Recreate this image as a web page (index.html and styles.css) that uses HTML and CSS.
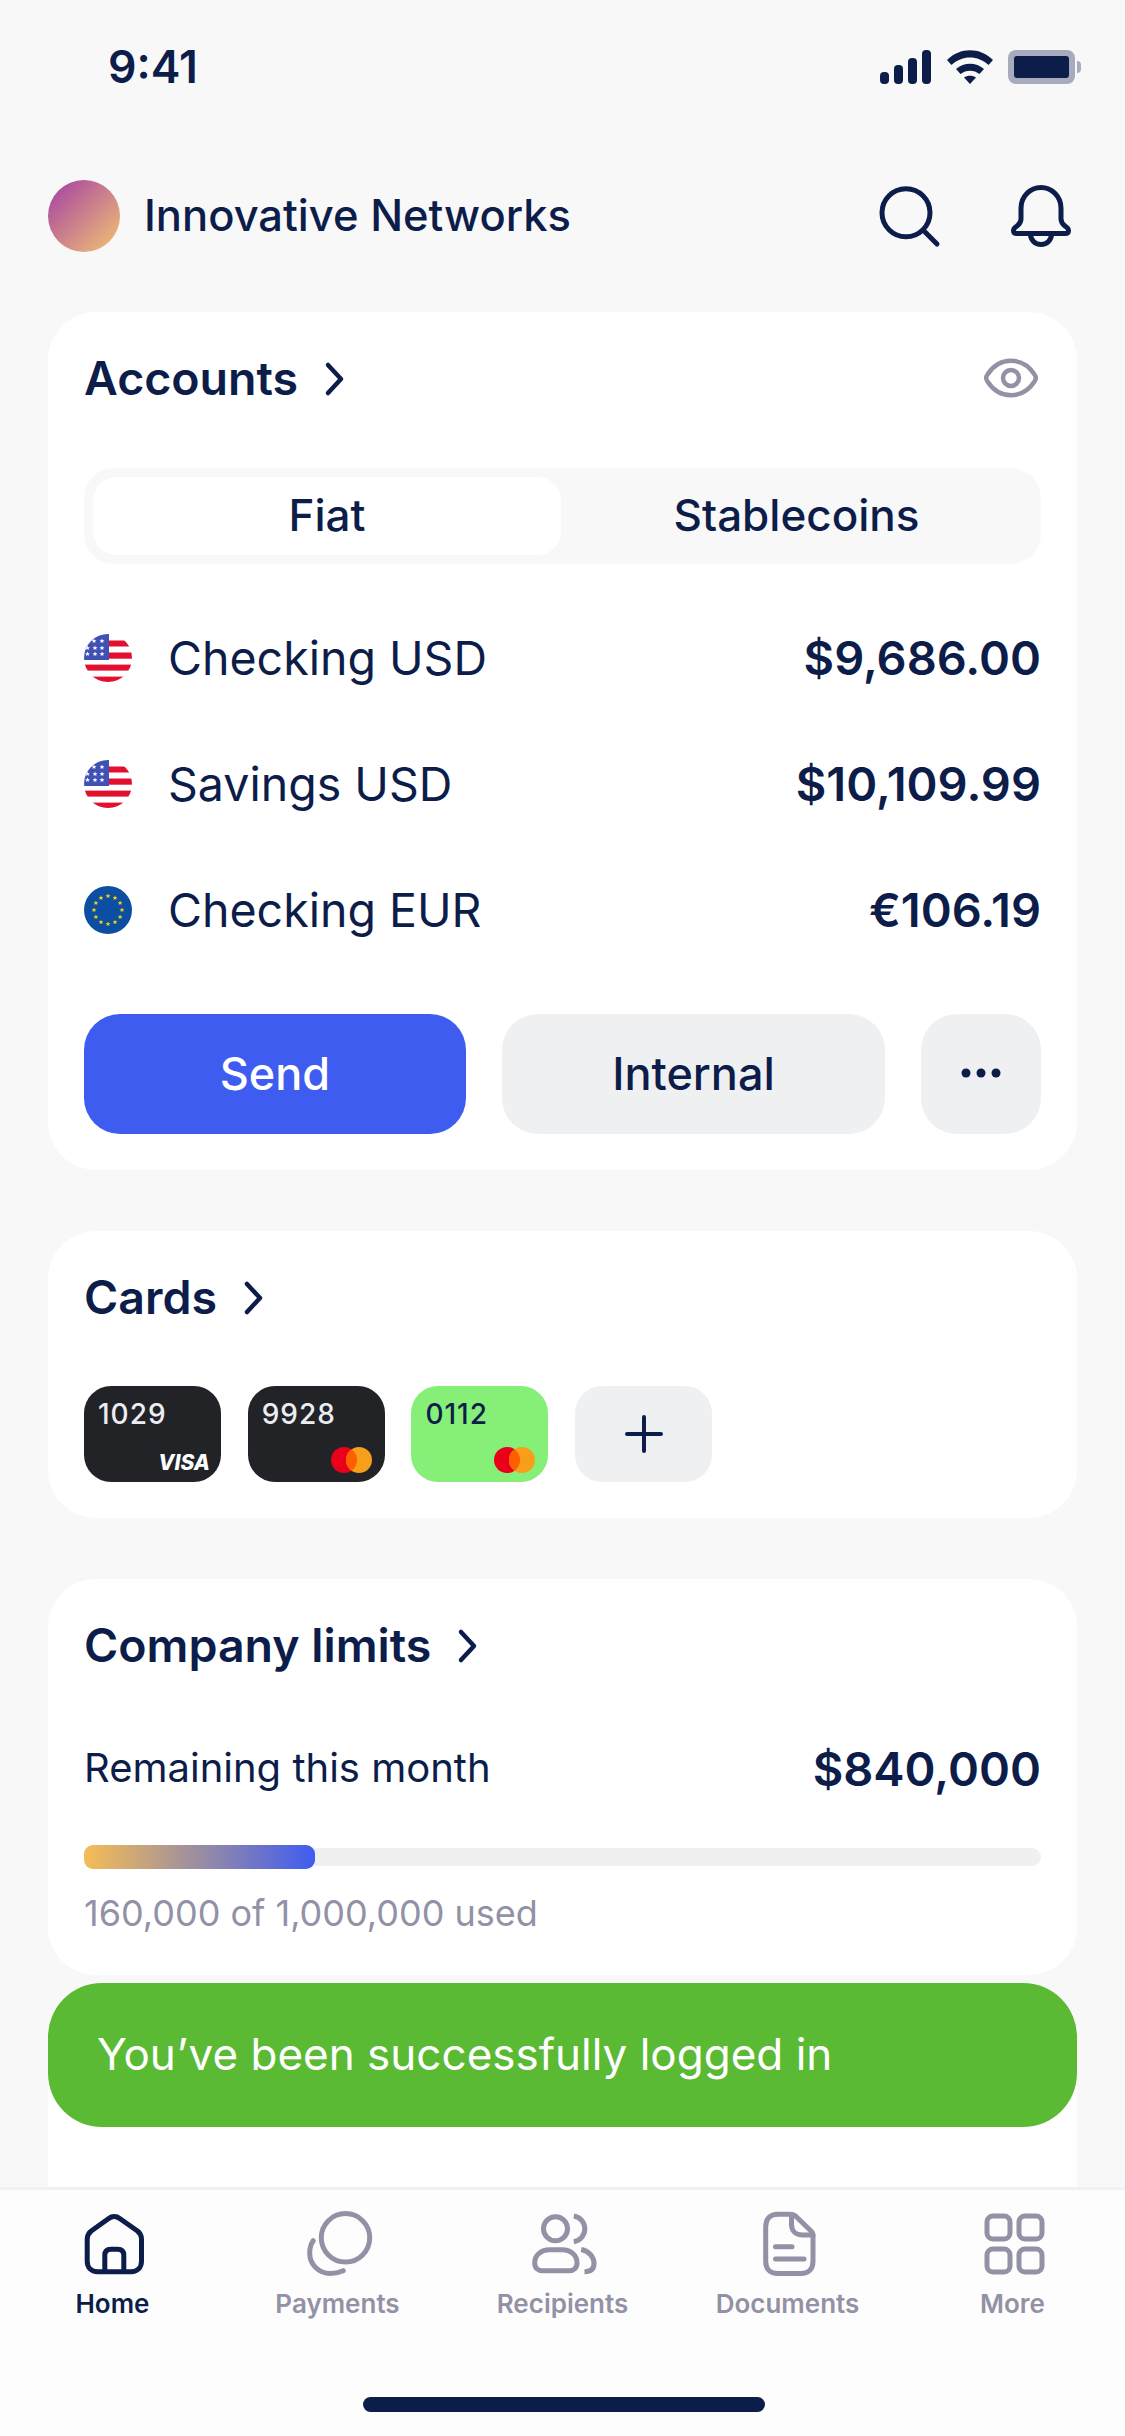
FILE: index.html
```html
<!DOCTYPE html>
<html lang="en">
<head>
	<meta charset="UTF-8">
	<title>Home</title>
	<link rel="stylesheet" href="styles.css">
</head>
<body>
	<svg class="defs" width="0" height="0">
		<defs>
			<polygon id="star" points="0,-2.4 .7,-.8 2.4,-.7 1.1,.4 1.5,2 0,1.1 -1.5,2 -1.1,.4 -2.4,-.7 -.7,-.8"/>
			<symbol id="us" viewBox="0 0 48 48">
				<clipPath id="usclip"><circle cx="24" cy="24" r="24"/></clipPath>
				<g clip-path="url(#usclip)">
					<rect width="48" height="48" fill="#fff"/>
					<rect x="25" y="6.500" width="23" height="6" fill="#e20f2f"/>
					<rect x="25" y="18.500" width="23" height="6.200" fill="#e20f2f"/>
					<rect y="30.600" width="48" height="6" fill="#e20f2f"/>
					<rect y="42.600" width="48" height="6" fill="#e20f2f"/>
					<rect width="25" height="26" fill="#3f51b5"/>
					<g fill="#fff">
						<use href="#star" x="10" y="7"/><use href="#star" x="18" y="7"/>
						<use href="#star" x="3.500" y="14"/><use href="#star" x="11" y="14"/><use href="#star" x="18" y="14"/>
						<use href="#star" x="3.500" y="20"/><use href="#star" x="11" y="20"/><use href="#star" x="18" y="20"/>
					</g>
				</g>
			</symbol>
			<symbol id="chevron" viewBox="0 0 24 36">
				<path d="M5 4l13 14L5 32" fill="none" stroke="#0d1d4a" stroke-width="4.500" stroke-linecap="round" stroke-linejoin="round"/>
			</symbol>
			<symbol id="mc" viewBox="0 0 41 26">
				<circle cx="13" cy="13" r="13" fill="#eb001b"/>
				<circle cx="28" cy="13" r="13" fill="#f79e1b"/>
				<path d="M20.500 2.300a13 13 0 0 1 0 21.400a13 13 0 0 1 0-21.400z" fill="#ff5f00"/>
			</symbol>
		</defs>
	</svg>

	<div class="status">
		<span class="time">9:41</span>
		<div class="status-icons">
			<svg width="52" height="34" viewBox="0 0 52 34" fill="#0d1d4a">
				<rect x="0" y="22" width="9" height="12" rx="4"/>
				<rect x="14" y="15" width="9" height="19" rx="4"/>
				<rect x="28" y="8" width="9" height="26" rx="4"/>
				<rect x="42" y="0" width="9" height="34" rx="4"/>
			</svg>
			<svg width="46" height="34" viewBox="0 0 46 34" fill="#0d1d4a">
				<path d="M0 10C13-3 33-3 46 10l-4.500 5C31 5 15 5 4.500 15z"/>
				<path d="M9 19c8-7 20-7 28 0l-4.500 5c-5.500-4.500-13.500-4.500-19 0z"/>
				<path d="M17 27.500c3.500-2.500 8.500-2.500 12 0L23 34z"/>
			</svg>
			<div class="battery"><div class="battery-fill"></div></div>
			<div class="battery-nub"></div>
		</div>
	</div>

	<div class="page">
		<div class="top">
			<div class="avatar"></div>
			<div class="company">Innovative Networks</div>
			<svg class="top-icon" width="72" height="72" viewBox="0 0 72 72" fill="none" stroke="#0d1d4a" stroke-width="5" stroke-linecap="round">
				<circle cx="33" cy="32.700" r="24"/>
				<path d="M50 50l14 14"/>
			</svg>
			<svg class="top-icon" width="72" height="72" viewBox="0 0 72 72" fill="none" stroke="#0d1d4a" stroke-width="5" stroke-linejoin="round">
				<path d="M16 28a20 20.500 0 0 1 40 0v11c0 3 1.500 5 4 7 2 1.500 3.500 2.500 3.500 4.500 0 2-1.500 3-3.500 3H12c-2 0-3.500-1-3.500-3 0-2 1.500-3 3.500-4.500 2.500-2 4-4 4-7z"/>
				<path d="M25.500 54c0 6 4.500 10.500 10.500 10.500S46.500 60 46.500 54"/>
			</svg>
		</div>

		<div class="card">
			<div class="card-head">
				<span class="card-title">Accounts</span>
				<svg class="chev" width="24" height="36"><use href="#chevron"/></svg>
				<svg class="eye" width="60" height="60" viewBox="0 0 60 60" fill="none" stroke="#9291a5" stroke-width="4.500">
					<path d="M6.500 32.500c-1.500-2-1.500-5 0-7C12 17 20 11.800 30 11.800s18 5.200 23.500 13.700c1.500 2 1.500 5 0 7C48 41 40 46.200 30 46.200S12 41 6.500 32.500z"/>
					<circle cx="30" cy="29" r="8"/>
				</svg>
			</div>
			<div class="segment">
				<div class="seg-item seg-on">Fiat</div>
				<div class="seg-item">Stablecoins</div>
			</div>
			<div class="accounts">
				<div class="account">
					<svg class="flag" width="48" height="48"><use href="#us"/></svg>
					<span class="account-name">Checking USD</span>
					<span class="amount">$9,686.00</span>
				</div>
				<div class="account">
					<svg class="flag" width="48" height="48"><use href="#us"/></svg>
					<span class="account-name">Savings USD</span>
					<span class="amount">$10,109.99</span>
				</div>
				<div class="account">
					<svg class="flag" width="48" height="48" viewBox="0 0 48 48">
						<circle cx="24" cy="24" r="24" fill="#0b4ea2"/>
						<g fill="#f7d116">
							<use href="#star" x="24" y="10"/><use href="#star" x="31" y="11.900"/><use href="#star" x="36.100" y="17"/>
							<use href="#star" x="38" y="24"/><use href="#star" x="36.100" y="31"/><use href="#star" x="31" y="36.100"/>
							<use href="#star" x="24" y="38"/><use href="#star" x="17" y="36.100"/><use href="#star" x="11.900" y="31"/>
							<use href="#star" x="10" y="24"/><use href="#star" x="11.900" y="17"/><use href="#star" x="17" y="11.900"/>
						</g>
					</svg>
					<span class="account-name">Checking EUR</span>
					<span class="amount">€106.19</span>
				</div>
			</div>
			<div class="actions">
				<div class="btn btn-send">Send</div>
				<div class="btn btn-gray">Internal</div>
				<div class="btn btn-gray btn-more">
					<svg width="40" height="10" viewBox="0 0 40 10" fill="#0d1d4a"><circle cx="5" cy="5" r="4.500"/><circle cx="20" cy="5" r="4.500"/><circle cx="35" cy="5" r="4.500"/></svg>
				</div>
			</div>
		</div>

		<div class="card">
			<div class="card-head">
				<span class="card-title">Cards</span>
				<svg class="chev" width="24" height="36"><use href="#chevron"/></svg>
			</div>
			<div class="chips">
				<div class="chip chip-dark">
					<span class="chip-num">1029</span>
					<span class="visa">VISA</span>
				</div>
				<div class="chip chip-dark">
					<span class="chip-num">9928</span>
					<svg class="mc" width="41" height="26"><use href="#mc"/></svg>
				</div>
				<div class="chip chip-green">
					<span class="chip-num">0112</span>
					<svg class="mc" width="41" height="26"><use href="#mc"/></svg>
				</div>
				<div class="chip chip-add">
					<svg width="38" height="38" viewBox="0 0 38 38" stroke="#0d1d4a" stroke-width="4" stroke-linecap="round"><path d="M19 2v34M2 19h34"/></svg>
				</div>
			</div>
		</div>

		<div class="card">
			<div class="card-head">
				<span class="card-title">Company limits</span>
				<svg class="chev" width="24" height="36"><use href="#chevron"/></svg>
			</div>
			<div class="limit-row">
				<span class="limit-label">Remaining this month</span>
				<span class="amount">$840,000</span>
			</div>
			<div class="bar"><div class="bar-fill" style="width:231px"></div></div>
			<div class="bar-note">160,000 of 1,000,000 used</div>
		</div>

		<div class="card card-hidden"></div>
	</div>

	<div class="toast">You’ve been successfully logged in</div>

	<div class="tabbar">
		<div class="tabs">
			<div class="tab tab-on">
				<svg width="72" height="72" viewBox="0 0 72 72" fill="none" stroke="#0d1d4a" stroke-width="5" stroke-linejoin="round">
					<path d="M31.700 10.500a9 9 0 0 1 11 0L60.500 23c2.500 2 4 4.500 4 8v22c0 6.500-4 10.700-10.500 10.700H20.700c-6.500 0-10.500-4.200-10.500-10.700V31c0-3.500 1.500-6 4-8z"/>
					<path d="M27.800 63.700V47.300c0-4 2-6 6-6h7c4 0 6 2 6 6v16.400"/>
				</svg>
				<span>Home</span>
			</div>
			<div class="tab">
				<svg width="72" height="72" viewBox="0 0 72 72" fill="none" stroke="#9291a5" stroke-width="5" stroke-linecap="round">
					<circle cx="43.500" cy="29.800" r="24.200"/>
					<path d="M11.200 32.700C8.500 36.500 7.700 41 7.700 45c0 11.500 9 20.500 20.500 20.500 4.700 0 9-1 13-2.800"/>
				</svg>
				<span>Payments</span>
			</div>
			<div class="tab">
				<svg width="72" height="72" viewBox="0 0 72 72" fill="none" stroke="#9291a5" stroke-width="5" stroke-linejoin="round">
					<circle cx="28.500" cy="20.700" r="12"/>
					<path d="M46.800 8a13 13 0 0 1 0 25.700"/>
					<path d="M7.700 55c0-8 6.500-13.200 15-13.200h12.300c8.500 0 15 5.200 15 13.200 0 5-3 7.800-8 7.800H15.700c-5 0-8-2.800-8-7.800z"/>
					<path d="M54.200 41.500c7.500 1.500 12.800 7 12.800 14 0 5-3 8.200-9.500 8.200"/>
				</svg>
				<span>Recipients</span>
			</div>
			<div class="tab">
				<svg width="72" height="72" viewBox="0 0 72 72" fill="none" stroke="#9291a5" stroke-width="5" stroke-linecap="round" stroke-linejoin="round">
					<path d="M38 6.200H26c-8 0-12.300 4.500-12.300 12.300v34.700c0 8 4.300 12.300 12.300 12.300h22.700c8 0 12.300-4.300 12.300-12.300V27c0-1.500-.5-2.500-1.500-3.500L43 7.500c-1.500-1-3-1.300-5-1.300z"/>
					<path d="M39.500 6.500v10c0 6.500 4.500 10.500 11 10.500H61"/>
					<path d="M23.500 38.700H40M23.500 51H52"/>
				</svg>
				<span>Documents</span>
			</div>
			<div class="tab">
				<svg width="72" height="72" viewBox="0 0 72 72" fill="none" stroke="#9291a5" stroke-width="5">
					<rect x="10" y="8" width="23" height="23" rx="6"/>
					<rect x="42" y="8" width="23" height="23" rx="6"/>
					<rect x="10" y="41" width="23" height="23" rx="6"/>
					<rect x="42" y="41" width="23" height="23" rx="6"/>
				</svg>
				<span>More</span>
			</div>
		</div>
		<div class="home-bar"></div>
	</div>
</body>
</html>
```

FILE: styles.css
```css
*{
	margin: 0;
	padding: 0;
	box-sizing: border-box;
}
html, body{
	width: 1125px;
	height: 2436px;
	overflow: hidden;
}
body{
	position: relative;
	background: #f8f8f9;
	color: #0d1d4a;
	font-family: Inter, "Liberation Sans", sans-serif;
}
.defs{
	position: absolute;
}
.status{
	height: 134px;
	display: flex;
	align-items: center;
	justify-content: space-between;
	padding: 0 44px 0 108px;
}
.time{
	font-size: 44.500px;
	font-weight: 600;
}
.status-icons{
	display: flex;
	align-items: center;
	gap: 15px;
}
.battery{
	width: 67px;
	height: 34px;
	background: #a7abbb;
	border-radius: 8px;
	padding: 6px;
}
.battery-fill{
	height: 100%;
	background: #0d1d4a;
	border-radius: 3px;
}
.battery-nub{
	width: 4px;
	height: 12px;
	background: #a7abbb;
	border-radius: 0 4px 4px 0;
	margin-left: -13px;
}
.page{
	padding: 46px 48px 0;
	display: flex;
	flex-direction: column;
	gap: 61px;
}
.top{
	height: 72px;
	display: flex;
	align-items: center;
	margin-bottom: -1px;
}
.avatar{
	width: 72px;
	height: 72px;
	border-radius: 50%;
	background: linear-gradient(135deg, #a23ea6, #f5c56f);
}
.company{
	font-size: 43.500px;
	font-weight: 500;
	margin-left: 24px;
	padding-bottom: 2px;
	flex: 1;
}
.top-icon{
	margin-left: 60px;
	flex-shrink: 0;
}
.card{
	background: #fff;
	border-radius: 48px;
	padding: 36px;
}
.card-head{
	height: 62px;
	display: flex;
	align-items: center;
}
.card-title{
	font-size: 46.500px;
	font-weight: 600;
	padding-bottom: 2px;
}
.chev{
	margin-left: 25px;
}
.eye{
	margin-left: auto;
}
.segment{
	height: 96px;
	margin-top: 58px;
	background: #f8f8f9;
	border-radius: 30px;
	padding: 9px;
	display: grid;
	grid-template-columns: 468px 1fr;
}
.seg-item{
	display: flex;
	align-items: center;
	justify-content: center;
	font-size: 44px;
	font-weight: 500;
	border-radius: 24px;
	padding-bottom: 2px;
}
.seg-on{
	background: #fff;
}
.accounts{
	margin-top: 30.500px;
}
.account{
	height: 126px;
	display: flex;
	align-items: center;
}
.account-name{
	font-size: 46.500px;
	margin-left: 36px;
	flex: 1;
}
.amount{
	font-size: 47px;
	font-weight: 600;
}
.actions{
	margin-top: 41.500px;
	display: flex;
	gap: 36px;
}
.btn{
	height: 120px;
	width: 383px;
	border-radius: 36px;
	display: flex;
	align-items: center;
	justify-content: center;
	font-size: 45px;
	font-weight: 550;
	padding-bottom: 2px;
}
.btn-send{
	width: 382px;
	background: #3f5cf0;
	color: #fff;
}
.btn-gray{
	background: #eff0f2;
}
.btn-more{
	width: 120px;
}
.chips{
	margin-top: 57px;
	display: flex;
	gap: 26.700px;
}
.chip{
	width: 137px;
	height: 96px;
	border-radius: 27px;
	padding: 14px 13px 9px 14px;
	display: flex;
	flex-direction: column;
	justify-content: space-between;
}
.chip-dark{
	background: #212327;
	color: #ecedf2;
}
.chip-green{
	background: #86ef78;
	color: #0d1d4a;
}
.chip-add{
	background: #eff0f2;
	align-items: center;
	justify-content: center;
	padding: 0;
}
.chip-num{
	font-size: 28px;
	line-height: 28px;
	font-weight: 500;
	letter-spacing: 1px;
}
.mc{
	align-self: flex-end;
}
.visa{
	align-self: flex-end;
	font-size: 21px;
	line-height: 20px;
	font-weight: 800;
	font-style: italic;
	color: #fff;
	margin-right: -2px;
}
.limit-row{
	height: 60px;
	margin-top: 61px;
	display: flex;
	align-items: center;
	justify-content: space-between;
}
.limit-label{
	font-size: 40px;
	padding-bottom: 2px;
}
.bar{
	height: 18px;
	margin-top: 50px;
	background: #eff0f1;
	border-radius: 9px;
	display: flex;
	align-items: center;
}
.bar-fill{
	height: 24px;
	border-radius: 9px;
	background: linear-gradient(90deg, #f5bd55, #3f5cf0);
}
.bar-note{
	margin-top: 27px;
	margin-bottom: 6px;
	font-size: 36px;
	line-height: 40px;
	color: #9291a5;
}
.card-hidden{
	height: 400px;
}
.toast{
	position: absolute;
	left: 48px;
	top: 1983px;
	width: 1029px;
	height: 144px;
	background: #5aba33;
	color: #fff;
	border-radius: 54px;
	padding: 0 0 2px 49px;
	display: flex;
	align-items: center;
	font-size: 44px;
}
.tabbar{
	position: absolute;
	left: 0;
	bottom: 0;
	width: 1125px;
	height: 249px;
	background: #fdfdfd;
	border-top: 3px solid #f0f1f2;
}
.tabs{
	display: grid;
	grid-template-columns: repeat(5, 225px);
	padding-top: 18px;
}
.tab{
	display: flex;
	flex-direction: column;
	align-items: center;
	gap: 7px;
	font-size: 26px;
	line-height: 34px;
	font-weight: 600;
	color: #9291a5;
}
.tab-on{
	color: #0d1d4a;
}
.home-bar{
	position: absolute;
	left: 363px;
	bottom: 24px;
	width: 402px;
	height: 15px;
	border-radius: 8px;
	background: #0d1d4a;
}
```
